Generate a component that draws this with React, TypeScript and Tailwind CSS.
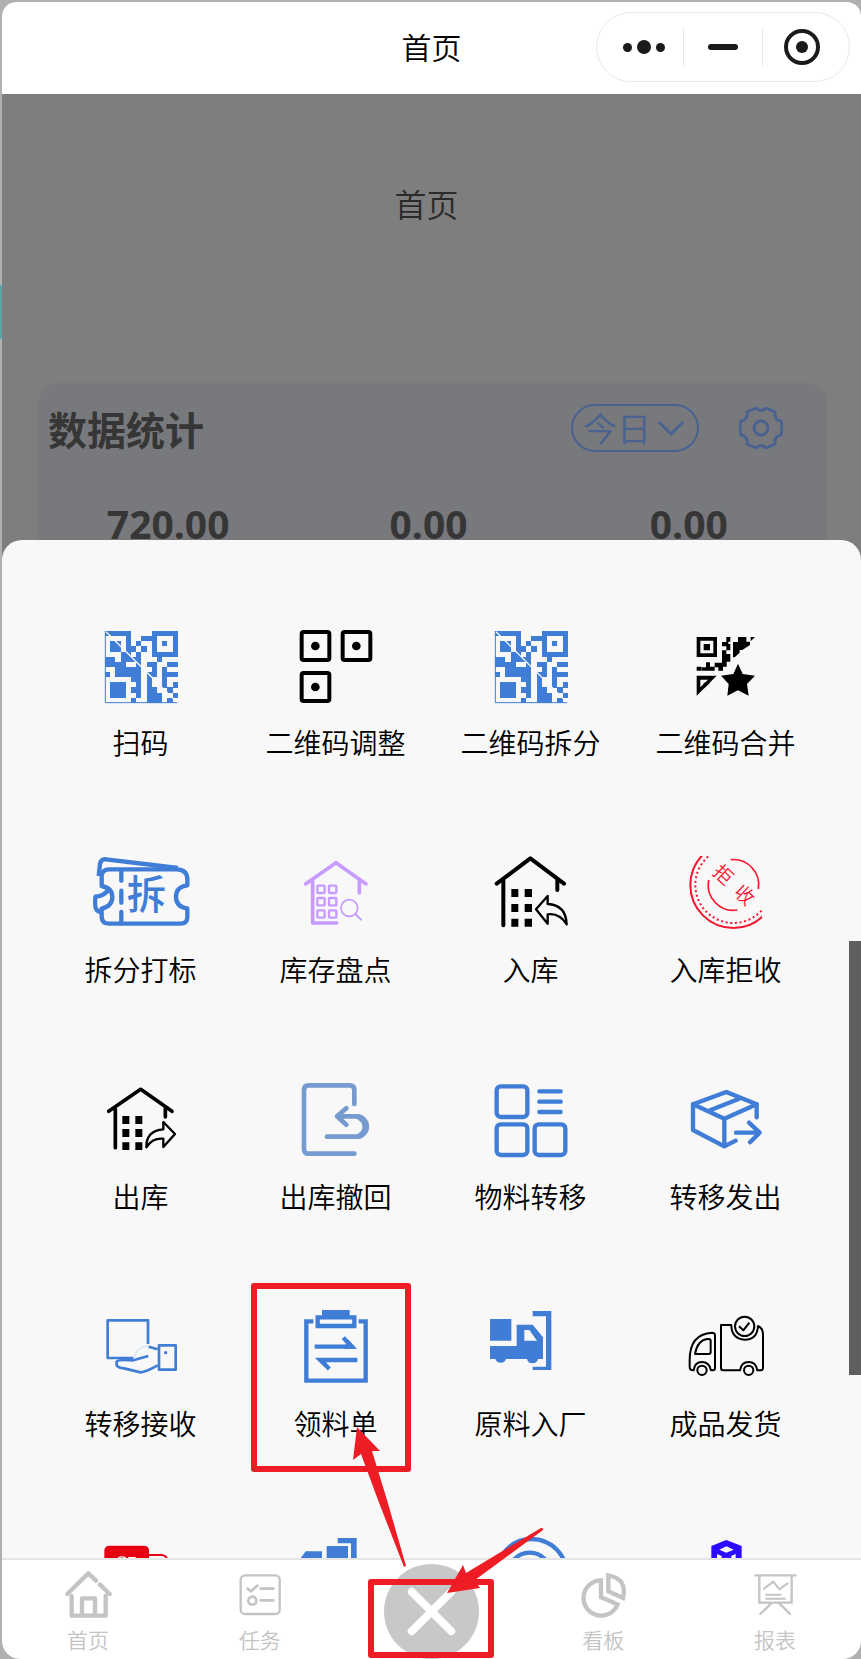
import { useState } from "react";
import type { ReactNode } from "react";

const BLUE = "#3f7dd6";

// # = filled module
const QR_ROWS = [
  "#####....#####",
  "....#..###...#",
  ".##.#.#..#.#.#",
  ".##.##.#.#...#",
  "...##.#..#####",
  "##.####...#...",
  "####..#.##..##",
  "..#####..#.#..",
  "#.#####.##.###",
  ".....##.#..#..",
  ".###..#.#..#.#",
  ".###.##.##..#.",
  ".###..#.###..#",
  ".....#..###.#.",
];

const QrIcon = () => (
  <>
    <g fill={BLUE} shapeRendering="crispEdges">
      {QR_ROWS.map((row, y) =>
        row
          .split("")
          .map((cell, x) =>
            cell === "#" ? (
              <rect
                key={`${x}-${y}`}
                x={133 + x * 15.6}
                y={93 + y * 15.4}
                width={15.8}
                height={15.6}
              />
            ) : null
          )
      )}
    </g>
    <path d="M134 93V308H350" fill="none" stroke={BLUE} strokeWidth={3} />
    <path d="M136 95L348 306" stroke="#f8f8f8" strokeWidth={4} />
  </>
);

const AdjustIcon = () => (
  <>
    <g fill="none" stroke="#000" strokeWidth={12}>
      <rect x={723} y={96} width={83} height={84} rx={6} />
      <rect x={846} y={96} width={83} height={84} rx={6} />
      <rect x={723} y={219} width={83} height={84} rx={6} />
    </g>
    <circle cx={764} cy={138} r={13} />
    <circle cx={887} cy={138} r={13} />
    <circle cx={764} cy={261} r={13} />
  </>
);

const MergeIcon = () => (
  <>
    <path
      fillRule="evenodd"
      d="M736 111H797V171H736ZM747 122V160H786V122ZM757 132H776V151H757Z"
    />
    <path d="M825 111H837V125H831V132H837V151H825V139H812V126H825ZM812 151H825V162H837V185H826V200H815V212H801V202H790V212H751V202H764V187H776V200H790V188H812ZM860 111H885V125H896V135L873 150H865V158L850 172H845V126H860ZM898 111H911L898 124ZM736 200H750V212H736Z" />
    <path
      fillRule="evenodd"
      d="M736 227H796L736 287ZM747 239V262L770 239Z"
    />
    <path d="M757 248H776L757 266Z" />
    <path d="M860 191L874 222L911 227L887 252L892 287L860 271L828 287L832 252L809 227L846 222Z" />
  </>
);

const TicketIcon = () => (
  <>
    <g fill="none" stroke={BLUE} strokeWidth={13} strokeLinejoin="round">
      <path d="M123 168V138Q124 118 146 118H346Q380 118 380 148V166Q346 170 346 200Q346 231 380 235V260Q380 281 358 281H146Q124 281 123 262V236Q155 228 155 201Q155 174 123 168Z" />
      <path d="M114 138L118 102Q121 86 136 88L352 114" />
      <path d="M104 199Q102 230 106 236Q110 246 124 247M100 201Q134 199 146 174" />
      <path d="M182 120V152M182 182V218M182 246V280" strokeLinecap="round" />
    </g>
    <text
      x={257}
      y={238}
      textAnchor="middle"
      fontSize={118}
      fontWeight={500}
      fill={BLUE}
    >
      拆
    </text>
  </>
);

const InventoryIcon = () => (
  <g fill="none" stroke="#c79bff" strokeLinecap="round" strokeLinejoin="round">
    <g strokeWidth={11}>
      <path d="M735 162L826 98L916 162M756 152V279H828M896 152V189" />
    </g>
    <g strokeWidth={7}>
      <rect x={770} y={167} width={22} height={22} rx={2} />
      <rect x={805} y={167} width={22} height={22} rx={2} />
      <rect x={770} y={204} width={22} height={22} rx={2} />
      <rect x={805} y={204} width={22} height={22} rx={2} />
      <rect x={770} y={241} width={22} height={22} rx={2} />
      <rect x={805} y={241} width={22} height={22} rx={2} />
    </g>
    <circle cx={866} cy={234} r={25} strokeWidth={5} />
    <path d="M884 252L901 269" strokeWidth={6} />
  </g>
);

const StockInIcon = () => (
  <>
    <path
      d="M137 161L238 85L339 161M157 150V286M319 150V180"
      fill="none"
      stroke="#000"
      strokeWidth={12}
      strokeLinecap="round"
      strokeLinejoin="round"
    />
    <path d="M181 177h21v24h-21zM221 177h22v24h-22zM181 222h21v24h-21zM221 222h22v24h-22zM181 266h21v24h-21zM221 266h22v24h-22z" />
    <path
      d="M255 238L290 198V222Q345 225 347 283Q325 248 290 253V281Z"
      fill="none"
      stroke="#000"
      strokeWidth={7}
      strokeLinejoin="round"
    />
  </>
);

const RejectIcon = () => (
  <>
    <clipPath id="stamp">
      <path d="M700 78H770L933 228V300H700Z" />
    </clipPath>
    <g fill="none" stroke="#f5152d">
      <g clipPath="url(#stamp)">
        <circle cx={846} cy={165} r={129} strokeWidth={6} />
        <circle cx={846} cy={165} r={114} strokeWidth={6} strokeDasharray="6 8" />
      </g>
      <path d="M838 89A76 76 0 0 1 921 177M772 150A76 76 0 0 0 858 240" strokeWidth={5} />
    </g>
    <g fill="#f5152d" fontSize={58} fontWeight={350} textAnchor="middle">
      <text transform="translate(816 134) rotate(43)" y={21}>
        拒
      </text>
      <text transform="translate(880 195) rotate(43)" y={21}>
        收
      </text>
    </g>
  </>
);

const StockOutIcon = () => (
  <>
    <path
      d="M144 154L240 88L334 154M164 148V263M314 146V171"
      fill="none"
      stroke="#000"
      strokeWidth={11}
      strokeLinecap="round"
      strokeLinejoin="round"
    />
    <path d="M185 168h21v24h-21zM224 168h21v24h-21zM185 207h21v24h-21zM224 207h21v24h-21zM185 247h21v23h-21zM224 247h21v23h-21z" />
    <path
      d="M343 222L308 186V208Q256 212 257 262Q275 233 308 236V261Z"
      fill="none"
      stroke="#000"
      strokeWidth={7}
      strokeLinejoin="round"
    />
  </>
);

const RevokeIcon = () => (
  <g fill="none" stroke="#769bd0" strokeWidth={14} strokeLinecap="round" strokeLinejoin="round">
    <path d="M881 132V90Q881 76 867 76H744Q730 76 730 90V266Q730 281 744 281H881" />
    <path d="M799 230H888A30 30 0 0 0 888 169H832M857 145L829 169L857 194" />
    <path d="M896 172A31 31 0 0 1 896 228" strokeWidth={17} />
  </g>
);

const TransferIcon = () => (
  <g fill="none" stroke={BLUE} strokeWidth={13} strokeLinecap="round">
    <rect x={137} y={79} width={92} height={92} rx={12} />
    <rect x={137} y={193} width={92} height={92} rx={12} />
    <rect x={251} y={193} width={92} height={92} rx={12} />
    <path d="M265 94H329M265 125H329M265 156H329" />
  </g>
);

const SendIcon = () => (
  <g fill="none" stroke={BLUE} strokeWidth={13} strokeLinecap="round" strokeLinejoin="round">
    <path d="M916 172V133L825 96L725 133V210L819 259L853 242" />
    <path d="M725 133L819 176L916 133M819 176V258M776 151L862 117M854 218H924M893 188L925 218L896 247" />
  </g>
);

const ReceiveIcon = () => (
  <>
    <g fill="none" stroke={BLUE} strokeWidth={8} strokeLinejoin="round">
      <path d="M262 222V151H141V264H218" />
      <path d="M263 258L218 271Q172 268 168 275V286Q172 293 190 295L240 307Q255 306 291 286M264 230L291 238" />
      <path d="M295 226H345V299H295Z" />
    </g>
    <path
      d="M220 266Q221 236 264 226"
      fill="none"
      stroke="#c6d7f1"
      strokeWidth={3}
    />
    <circle cx={315} cy={248} r={5} fill={BLUE} />
  </>
);

const OrderIcon = () => (
  <>
    <g fill="none" stroke={BLUE} strokeWidth={13}>
      <path d="M758 154H737V332H915V154H894" />
      <path d="M771 142H881V168H771Z" />
      <path d="M762 230H872L848 203M890 270H780L806 297" />
    </g>
    <path d="M784 120H867V140H784ZM848 236H889L862 208ZM804 264H763L790 290Z" fill={BLUE} />
  </>
);

const FactoryIcon = () => (
  <g fill={BLUE}>
    <path d="M117 147H181V212H117ZM245 123H301V300H245V290H285V139H245Z" />
    <path
      fillRule="evenodd"
      d="M117 228H197V164H245L276 202V267H261A17 17 0 0 1 228 267H165A17 17 0 0 1 133 267H117ZM220 180V212H258L235 180Z"
    />
  </g>
);

const DeliveryIcon = () => (
  <g fill="none" stroke="#000" strokeWidth={6} strokeLinejoin="round">
    <path d="M840 165H809V294Q809 301 816 301H866Q870 276 892 276Q914 276 918 301H928Q935 301 935 294V194Q935 174 920 168Q918 209 880 209Q840 206 840 165Z" />
    <path d="M791 196Q791 188 782 188Q715 192 715 270V292Q715 301 727 301Q730 276 752 276Q774 276 779 301H785Q791 301 791 294Z" />
    <path d="M778 212Q778 206 768 207Q738 211 731 252H772Q778 252 778 246Z" />
    <circle cx={752} cy={301} r={14} />
    <circle cx={892} cy={301} r={14} />
    <circle cx={880} cy={169} r={29} />
    <path d="M863 169L876 181L894 158" />
  </g>
);

const RedCardIcon = () => (
  <>
    <path d="M312 200V150Q314 137 328 137H432Q445 138 446 150V200Z" fill="#e60012" />
    <path d="M446 165H484Q496 166 500 176V200" fill="none" stroke="#e60012" strokeWidth={6} />
    <path d="M354 173Q364 168 376 173M384 173H406" stroke="#fff" strokeWidth={4} />
  </>
);

const TruckOutIcon = () => (
  <path
    d="M898 176L914 154H963V200H898ZM977 138H1041V200H977ZM1010 114H1067V200H1050V130H1010Z"
    fill={BLUE}
  />
);

const RingsIcon = () => (
  <g fill="none" stroke={BLUE} strokeWidth={13}>
    <circle cx={302} cy={222} r={105} />
    <circle cx={296} cy={222} r={64} />
  </g>
);

const CubeIcon = () => (
  <>
    <path d="M884 120L930 138V220H839V138Z" fill="#2b0bff" />
    <path d="M863 149L884 139L906 149L884 158ZM856 162L884 174L912 162V220H856Z" fill="#f8f8f8" />
    <path d="M870 166L884 174L899 166V220H870Z" fill="#2b0bff" />
  </>
);

type MenuItem = { label: string; viewBox: string; icon: ReactNode };

const MENU: MenuItem[] = [
  { label: "扫码", viewBox: "91 93 300 216", icon: <QrIcon /> },
  { label: "二维码调整", viewBox: "676 93 300 216", icon: <AdjustIcon /> },
  { label: "二维码拆分", viewBox: "91 93 300 216", icon: <QrIcon /> },
  { label: "二维码合并", viewBox: "674 93 300 216", icon: <MergeIcon /> },
  { label: "拆分打标", viewBox: "91 84 300 216", icon: <TicketIcon /> },
  { label: "库存盘点", viewBox: "676 84 300 216", icon: <InventoryIcon /> },
  { label: "入库", viewBox: "90 84 300 216", icon: <StockInIcon /> },
  { label: "入库拒收", viewBox: "674 84 300 216", icon: <RejectIcon /> },
  { label: "出库", viewBox: "91 75 300 216", icon: <StockOutIcon /> },
  { label: "出库撤回", viewBox: "676 75 300 216", icon: <RevokeIcon /> },
  { label: "物料转移", viewBox: "90 75 300 216", icon: <TransferIcon /> },
  { label: "转移发出", viewBox: "674 75 300 216", icon: <SendIcon /> },
  { label: "转移接收", viewBox: "91 126 300 216", icon: <ReceiveIcon /> },
  { label: "领料单", viewBox: "676 126 300 216", icon: <OrderIcon /> },
  { label: "原料入厂", viewBox: "90 126 300 216", icon: <FactoryIcon /> },
  { label: "成品发货", viewBox: "674 126 300 216", icon: <DeliveryIcon /> },
];

// only the top of this row shows above the tab bar
const MORE = [
  { name: "red-card", viewBox: "272 117 300 216", icon: <RedCardIcon /> },
  { name: "truck-out", viewBox: "855 117 300 216", icon: <TruckOutIcon /> },
  { name: "rings", viewBox: "150 117 300 216", icon: <RingsIcon /> },
  { name: "cube", viewBox: "733 117 300 216", icon: <CubeIcon /> },
];

const TABS: MenuItem[] = [
  {
    label: "首页",
    viewBox: "192 210 144 144",
    icon: (
      <g strokeWidth={13}>
        <path d="M202 282L265 220L288 242M300 254L329 282" />
        <path d="M215 288V347H317V288M246 345V295H285V345" />
      </g>
    ),
  },
  {
    label: "任务",
    viewBox: "709 210 144 144",
    icon: (
      <>
        <rect x={723} y={226} width={117} height={116} rx={13} strokeWidth={7} />
        <g strokeWidth={8}>
          <path d="M744 266L754 274L773 257M783 266H821M783 301H821" />
          <circle cx={758} cy={302} r={12} />
        </g>
      </>
    ),
  },
  {
    label: "看板",
    viewBox: "450 210 144 144",
    icon: (
      <g strokeWidth={13} strokeLinejoin="miter" strokeLinecap="butt">
        <path d="M516 241A53 53 0 1 0 566 313L516 292Z" />
        <path d="M538 226V274L582 294Q596 236 538 226Z" />
      </g>
    ),
  },
  {
    label: "报表",
    viewBox: "966 210 144 144",
    icon: (
      <g strokeWidth={7}>
        <path d="M979 226H1100M991 226V308H1088V226M1026 311L994 342M1052 311L1083 342" />
        <path d="M1005 266L1033 245L1051 268L1076 250M1011 284H1055M1011 296H1068" strokeWidth={6} />
      </g>
    ),
  },
];

const Tab = ({ label, viewBox, icon }: MenuItem) => (
  <button className="flex flex-1 flex-col items-center gap-[6px] pt-[10px] pb-[5px]">
    <svg
      viewBox={viewBox}
      className="size-12"
      fill="none"
      stroke="#c4c4c4"
      strokeLinecap="round"
      strokeLinejoin="round"
      aria-hidden="true"
    >
      {icon}
    </svg>
    <span className="text-[21px] leading-[30px] text-[#c4c4c4]">{label}</span>
  </button>
);

const App = () => {
  const [range, setRange] = useState("今日");

  return (
    <div className="relative h-screen overflow-hidden bg-[#b0b0b0] pt-[2px] pl-[2px] font-['Noto_Sans_CJK_SC',sans-serif] font-[350]">
      <div className="absolute top-[285px] left-0 h-[54px] w-[2px] bg-[#5fa5a5]" />

      <div className="flex h-full flex-col overflow-hidden rounded-t-[14px] rounded-b-[18px] bg-[#7e7e7e]">
        <header className="relative flex h-[92px] shrink-0 items-center justify-center bg-white pb-1">
          <h1 className="text-[30px] text-black">首页</h1>
          <div className="absolute top-[10px] right-[11px] flex h-[70px] w-[254px] items-center rounded-full border border-[#e8e8e8]">
            <button aria-label="更多" className="flex w-[86px] items-center justify-center gap-[5px] pl-2">
              <span className="size-[9px] rounded-full bg-[#1a1a1a]" />
              <span className="size-[14px] rounded-full bg-[#1a1a1a]" />
              <span className="size-[9px] rounded-full bg-[#1a1a1a]" />
            </button>
            <span className="h-[38px] w-px bg-[#e8e8e8]" />
            <button aria-label="最小化" className="flex flex-1 items-center justify-center">
              <span className="h-[6px] w-[30px] rounded-full bg-[#1a1a1a]" />
            </button>
            <span className="h-[38px] w-px bg-[#e8e8e8]" />
            <button aria-label="关闭" className="flex w-[86px] items-center justify-center pr-2">
              <span className="flex size-9 items-center justify-center rounded-full border-4 border-[#1a1a1a]">
                <span className="size-3 rounded-full bg-[#1a1a1a]" />
              </span>
            </button>
          </div>
        </header>

        <main className="h-[466px] shrink-0 overflow-hidden pt-[85px] pr-[34px] pl-9">
          <h2 className="pr-3 text-center text-[32px] leading-[48px] text-[#2a2a2a]">首页</h2>
          <section className="mt-[156px] h-[200px] rounded-[20px] bg-[#78797d] pt-[21px] pr-2">
            <div className="flex h-12 items-center pr-9 pl-[10px]">
              <h3 className="flex-1 text-[39px] font-bold text-[#363636]">数据统计</h3>
              <div className="relative">
                <select
                  aria-label="统计范围"
                  value={range}
                  onChange={(e) => setRange(e.target.value)}
                  className="h-12 w-32 appearance-none rounded-full border-2 border-[#4a6290] pl-[10px] text-[34px] leading-[44px] text-[#4a6290]"
                >
                  <option>今日</option>
                  <option>本周</option>
                  <option>本月</option>
                </select>
                <svg
                  viewBox="0 0 28 16"
                  className="pointer-events-none absolute top-4 right-[14px] h-4 w-7"
                  fill="none"
                  stroke="#4a6290"
                  strokeWidth={3}
                >
                  <path d="M2 2L14 14L26 2" />
                </svg>
              </div>
              <button aria-label="设置" className="ml-10">
                <svg
                  viewBox="0 0 44 44"
                  className="size-11"
                  fill="none"
                  stroke="#4a6290"
                  strokeWidth={3}
                  strokeLinejoin="round"
                >
                  <path d="M17 2Q22 7 27 2L36 6Q35 14 42 15Q44 22 42 29Q35 30 36 38L27 42Q22 37 17 42L8 38Q9 30 2 29Q0 22 2 15Q9 14 8 6Z" />
                  <circle cx={22} cy={22} r={7} />
                </svg>
              </button>
            </div>
            <div className="mt-[45px] grid grid-cols-3 text-center font-['Open_Sans'] text-[39px] leading-[54px] font-bold text-[#363636]">
              <span>720.00</span>
              <span>0.00</span>
              <span>0.00</span>
            </div>
          </section>
        </main>

        <section className="relative -mt-5 min-h-0 flex-1 overflow-hidden rounded-t-[20px] bg-[#f8f8f8] pt-[91px] pr-[38px] pl-[41px]">
          <div className="grid grid-cols-4 gap-y-24">
            {MENU.map(({ label, viewBox, icon }) => (
              <button key={label} className="relative flex flex-col items-center gap-[19px]">
                <svg viewBox={viewBox} className="h-[72px] w-[100px] overflow-visible" aria-hidden="true">
                  {icon}
                </svg>
                <span className="text-[28px] leading-10 whitespace-nowrap text-black">{label}</span>
                {label === "领料单" && (
                  <span className="absolute -top-[29px] -bottom-[29px] left-1/2 w-40 -translate-x-[85px] rounded-[3px] border-6 border-[#ee1c25]" />
                )}
              </button>
            ))}
            {MORE.map(({ name, viewBox, icon }) => (
              <button key={name} aria-label={name} className="flex flex-col items-center">
                <svg viewBox={viewBox} className="h-[72px] w-[100px] overflow-visible" aria-hidden="true">
                  {icon}
                </svg>
              </button>
            ))}
          </div>
        </section>

        <nav className="relative flex shrink-0 border-t-2 border-[#e5e5e5] bg-white">
          <Tab {...TABS[0]} />
          <Tab {...TABS[1]} />
          <div className="relative flex flex-1 justify-center pt-1">
            <button aria-label="关闭菜单" className="size-[95px] rounded-full bg-[#c8c8c8]">
              <svg
                viewBox="0 0 96 96"
                className="size-full"
                stroke="#fff"
                strokeWidth={8}
                strokeLinecap="round"
              >
                <path d="M28 28L68 68M68 28L28 68" />
              </svg>
            </button>
            <span className="absolute top-[19px] bottom-px left-1/2 w-[126px] -translate-x-1/2 rounded-[3px] border-6 border-[#ee1c25]" />
          </div>
          <Tab {...TABS[2]} />
          <Tab {...TABS[3]} />
        </nav>
      </div>

      <div className="absolute top-[941px] right-0 h-[434px] w-3 bg-[#5e5f61]" />

      {/* arrows lie over both the sheet and the tab bar */}
      <svg
        viewBox="331 1419 200 240"
        className="pointer-events-none absolute bottom-0 left-1/2 h-60 w-[200px] -translate-x-[100px] overflow-visible"
        fill="#ee1c25"
        aria-hidden="true"
      >
        <path d="M357 1427L380 1451L372 1451L387 1500L406 1566L404 1567L378 1500L361 1454L353 1460Z" />
        <path d="M447 1593L463 1565L466 1573L541 1528Q544 1528 543 1530L475 1580L480 1588Z" />
      </svg>
    </div>
  );
};

export default App;
